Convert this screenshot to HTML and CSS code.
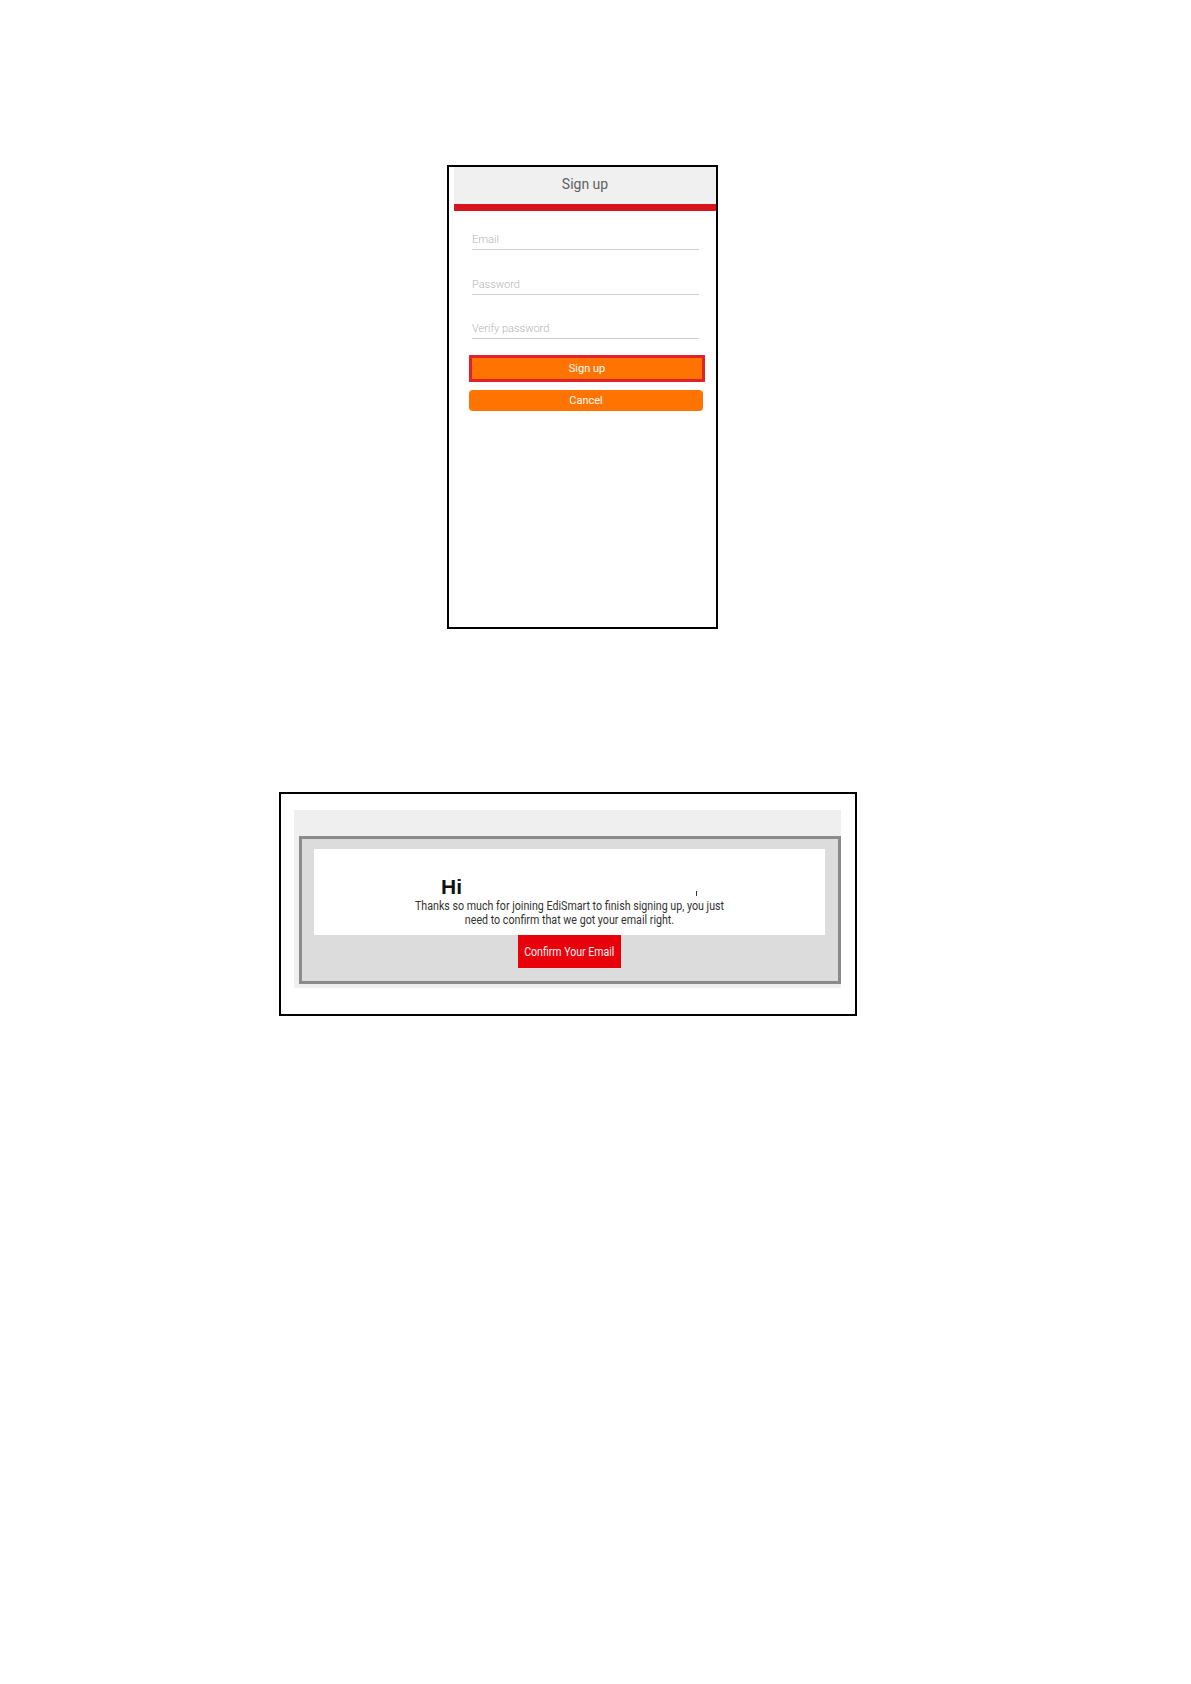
FILE: index.html
```html
<!DOCTYPE html>
<html lang="en">
<head>
<meta charset="utf-8">
<title>Sign up</title>
<link rel="stylesheet" href="styles.css">
</head>
<body>
<div class="page">
  <section class="phone">
    <header class="phone-header">
      <h1 class="phone-title">Sign up</h1>
    </header>
    <div class="form">
      <div class="field"><span class="field-label">Email</span></div>
      <div class="field"><span class="field-label">Password</span></div>
      <div class="field"><span class="field-label">Verify password</span></div>
    </div>
    <div class="actions">
      <div class="btn btn-signup">Sign up</div>
      <div class="btn btn-cancel">Cancel</div>
    </div>
  </section>

  <section class="email-frame">
    <div class="email-bg">
      <div class="email-card">
        <div class="email-body">
          <div class="hi-row">
            <span class="hi">Hi</span>
            <span class="tick"></span>
          </div>
          <p class="email-text">Thanks so much for joining EdiSmart to finish signing up, you just<br>need to confirm that we got your email right.</p>
        </div>
        <div class="confirm-btn"><span class="confirm-label">Confirm Your Email</span></div>
      </div>
    </div>
  </section>
</div>
</body>
</html>
```

FILE: styles.css
```css
html, body {
  margin: 0;
  padding: 0;
  background: #ffffff;
}

.page {
  display: flex;
  flex-direction: column;
  align-items: flex-start;
  font-family: Roboto, "Liberation Sans", sans-serif;
}

/* ---------- Sign up phone mock ---------- */
.phone {
  margin: 165px 0 0 447px;
  width: 271px;
  height: 464px;
  border: 2px solid #000;
  box-sizing: border-box;
  background: #fff;
}

.phone-header {
  margin-left: 5px;
  height: 44px;
  box-sizing: border-box;
  background: #f0f0f1;
  border-bottom: 7px solid #d6151d;
}

.phone-title {
  margin: 0;
  font-family: Roboto, sans-serif;
  font-weight: 400;
  font-size: 14px;
  line-height: 35px;
  text-align: center;
  color: #606060;
}

.form {
  display: flex;
  flex-direction: column;
  gap: 27.5px;
  padding: 22px 17px 0 23px;
}

.field {
  border-bottom: 1px solid #cfcfcf;
}

.field-label {
  display: block;
  font-size: 11px;
  line-height: 13px;
  padding-bottom: 3px;
  color: #b3b3b3;
  font-weight: 300;
}

.actions {
  display: flex;
  flex-direction: column;
  gap: 8px;
  padding: 16px 0 0 20px;
}

.btn {
  box-sizing: border-box;
  background: #ff7300;
  color: #fff;
  font-size: 11px;
  text-align: center;
}

.btn-signup {
  width: 236px;
  height: 27px;
  border: 3px solid #e2212a;
  line-height: 21px;
}

.btn-cancel {
  width: 234px;
  height: 21px;
  line-height: 21px;
  border-radius: 4px;
}

/* ---------- Confirmation email mock ---------- */
.email-frame {
  margin: 163px 0 0 279px;
  width: 578px;
  height: 224px;
  border: 2px solid #000;
  box-sizing: border-box;
  background: #fff;
}

.email-bg {
  margin: 16px 0 0 13px;
  width: 547px;
  height: 178px;
  box-sizing: border-box;
  padding: 26px 0 0 5px;
  background: #efefef;
}

.email-card {
  width: 542px;
  height: 148px;
  box-sizing: border-box;
  border: 3px solid #8b8b8b;
  background: #dcdcdc;
  padding: 10px 13px 0 12px;
}

.email-body {
  height: 86px;
  box-sizing: border-box;
  padding-top: 27px;
  background: #fff;
}

.hi-row {
  display: flex;
  align-items: flex-end;
  padding-left: 127px;
  height: 22px;
}

.hi {
  font-family: "Liberation Sans", Arial, sans-serif;
  font-weight: 700;
  font-size: 21px;
  line-height: 22px;
  color: #111;
}

.tick {
  width: 1px;
  height: 5px;
  margin: 0 0 2px 234px;
  background: #333;
}

.email-text {
  margin: 1px 0 0;
  font-family: Roboto, sans-serif;
  font-size: 12px;
  line-height: 14px;
  color: #333;
  text-align: center;
  transform: scaleX(0.89);
  transform-origin: center;
}

.confirm-btn {
  margin: 0 auto;
  width: 103px;
  height: 33px;
  background: #e8000b;
  display: flex;
  align-items: center;
  justify-content: center;
}

.confirm-label {
  display: inline-block;
  font-family: Roboto, sans-serif;
  font-size: 12px;
  line-height: 14px;
  color: #fff0f0;
  white-space: nowrap;
  transform: scaleX(0.88);
}
```
